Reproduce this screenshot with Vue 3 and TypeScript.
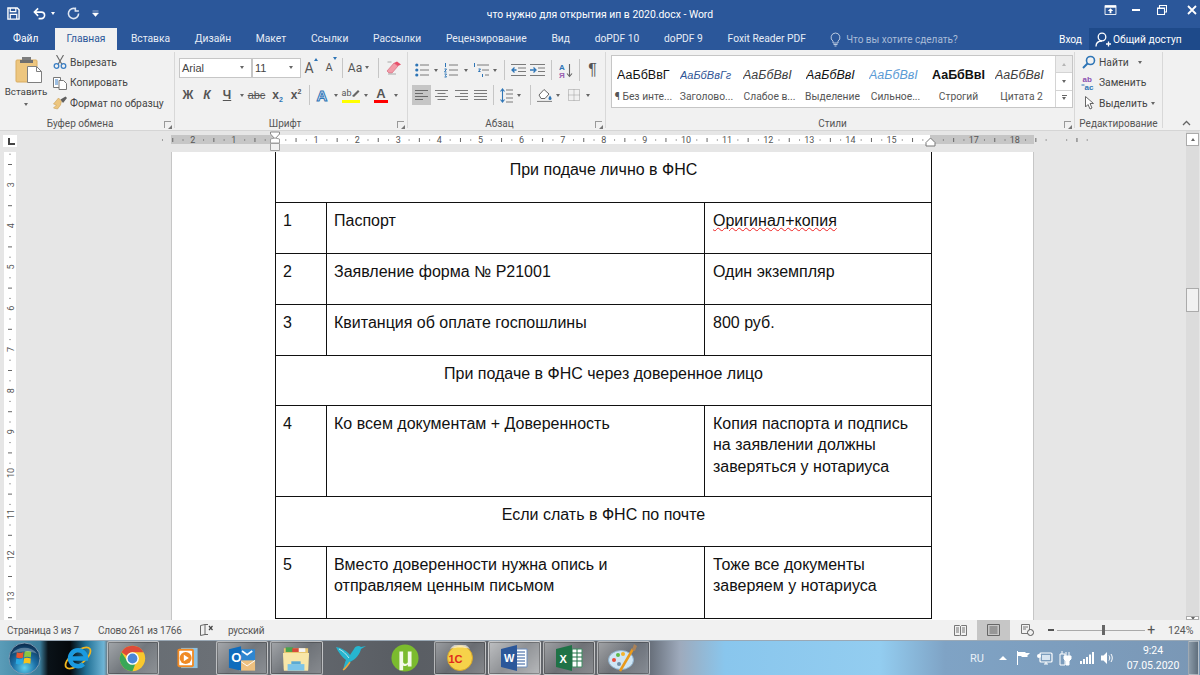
<script setup lang="ts">
const tabs = ['Вставка', 'Дизайн', 'Макет', 'Ссылки', 'Рассылки', 'Рецензирование', 'Вид', 'doPDF 10', 'doPDF 9', 'Foxit Reader PDF']
const styles = [
  { s: 'АаБбВвГ', l: '¶ Без инте...', c: 's-normal' },
  { s: 'АаБбВвГг', l: 'Заголово...', c: 's-head' },
  { s: 'АаБбВвI', l: 'Слабое в...', c: 's-weak' },
  { s: 'АаБбВвI', l: 'Выделение', c: 's-em' },
  { s: 'АаБбВвI', l: 'Сильное...', c: 's-strong' },
  { s: 'АаБбВвI', l: 'Строгий', c: 's-bold' },
  { s: 'АаБбВвI', l: 'Цитата 2', c: 's-quote' },
]
type Row = { kind: 'head' | 'row'; h: string; text?: string; n?: string; a?: string[]; b?: string[]; wavy?: boolean }
const rows: Row[] = [
  { kind: 'head', h: 'h50', text: 'При подаче лично в ФНС' },
  { kind: 'row', h: 'h51', n: '1', a: ['Паспорт'], b: ['Оригинал+копия'], wavy: true },
  { kind: 'row', h: 'h51', n: '2', a: ['Заявление форма № Р21001'], b: ['Один экземпляр'] },
  { kind: 'row', h: 'h51', n: '3', a: ['Квитанция об оплате госпошлины'], b: ['800 руб.'] },
  { kind: 'head', h: 'h50', text: 'При подаче в ФНС через доверенное лицо' },
  { kind: 'row', h: 'h91', n: '4', a: ['Ко всем документам + Доверенность'], b: ['Копия паспорта и подпись', 'на заявлении должны', 'заверяться у нотариуса'] },
  { kind: 'head', h: 'h50', text: 'Если слать в ФНС по почте' },
  { kind: 'row', h: 'h72', n: '5', a: ['Вместо доверенности нужна опись и', 'отправляем ценным письмом'], b: ['Тоже все документы', 'заверяем у нотариуса'] },
]
const X0 = 104
const CM = 41.1
const hNums: { x: number; t: number }[] = []
for (let n = -2; n <= 18; n++) if (n !== 0 && n !== 16) hNums.push({ x: X0 + n * CM, t: Math.abs(n) })
const hTicks: number[] = []
const hDots: number[] = []
for (let n = -3; n <= 19; n++) {
  hTicks.push(X0 + (n + 0.5) * CM)
  hDots.push(X0 + (n + 0.25) * CM, X0 + (n + 0.75) * CM)
}
const vNums: { y: number; t: number }[] = []
const vTicks: number[] = []
const vDots: number[] = []
for (let n = 3; n <= 13; n++) vNums.push({ y: -91 + n * 41.2, t: n })
for (let n = 2; n <= 13; n++) {
  vTicks.push(-91 + (n + 0.5) * 41.2)
  vDots.push(-91 + (n + 0.25) * 41.2, -91 + (n + 0.75) * 41.2)
}
</script>

<template>
  <div class="app">
    <header class="title">
      <div class="qat">
        <svg width="13" height="13" viewBox="0 0 14 14"><path d="M1 1h10l2 2v10H1z" fill="none" stroke="#fff" stroke-width="1.500"/><path d="M3.500 1v4h6V1M3.500 13V8h7v5" fill="none" stroke="#fff" stroke-width="1.300"/></svg>
        <svg class="q-undo" width="13" height="13" viewBox="0 0 14 14"><path d="M2 5.500h7a3.500 3.500 0 0 1 0 7H6M5.500 1.500 1.500 5.500l4 4" fill="none" stroke="#fff" stroke-width="1.700"/></svg>
        <i class="caret white q-c1"></i>
        <svg class="q-redo" width="13" height="13" viewBox="0 0 14 14"><path d="M9.600 2.200A5.500 5.500 0 1 0 12.500 7M9 .5v3.800h3.800" fill="none" stroke="#dfe7f3" stroke-width="1.700"/></svg>
        <svg class="q-more" width="7" height="7" viewBox="0 0 7 7"><path d="M.5 1h6M.5 3h6L3.500 6.500z" fill="#fff" stroke="#fff" stroke-width=".5"/></svg>
      </div>
      <div class="doc-name">что нужно для открытия ип в 2020.docx - Word</div>
      <div class="win">
        <svg width="13" height="10" viewBox="0 0 13 11"><path d="M.5.500h12v10H.5z" fill="none" stroke="#fff"/><path d="M.5 2h12" stroke="#fff" stroke-width="2"/><path d="M6.500 3.500l3 3H7.500v2.500h-2V6.500h-2z" fill="#fff"/></svg>
        <svg class="w-min" width="8" height="2" viewBox="0 0 8 2"><path d="M0 1h8" stroke="#fff" stroke-width="2"/></svg>
        <svg class="w-max" width="10" height="10" viewBox="0 0 10 10"><path d="M.5 3h7v6.500h-7zM.5 3.500h7M2.500 2.500V.5h7v6.500h-2" fill="none" stroke="#fff" stroke-width="1.100"/></svg>
        <svg class="w-x" width="10" height="10" viewBox="0 0 10 10"><path d="M1 1l8 8M9 1l-8 8" stroke="#fff" stroke-width="1.800"/></svg>
      </div>
    </header>

    <nav class="tabs">
      <span class="tab file">Файл</span>
      <span class="tab active">Главная</span>
      <span v-for="t in tabs" :key="t" class="tab">{{ t }}</span>
      <span class="tell">
        <svg width="11" height="15" viewBox="0 0 11 15"><path d="M5.500 1a4.500 4.500 0 0 1 2.500 8.200V11H3V9.200A4.500 4.500 0 0 1 5.500 1zM3.500 12.500h4M4.500 14h2" fill="none" stroke="#b9c9e0"/></svg>
        Что вы хотите сделать?
      </span>
      <span class="login">Вход</span>
      <span class="share">
        <svg width="16" height="15" viewBox="0 0 16 15"><circle cx="7" cy="5" r="3.800" fill="none" stroke="#fff" stroke-width="1.300"/><path d="M1 14.500c0-3.500 2.500-5.500 6-5.500M11 12h5M13.500 9.500v5" fill="none" stroke="#fff" stroke-width="1.300"/></svg>
        Общий доступ
      </span>
    </nav>

    <section class="ribbon">
      <div class="group g-clip">
        <div class="g-body clip-body">
          <div class="paste">
            <svg width="28" height="26" viewBox="0 0 28 26"><rect x="1" y="3" width="21" height="22" rx="1" fill="#edc67f" stroke="#d9ad62"/><rect x="7" y="0" width="9" height="6" fill="#7d7d7d"/><rect x="5" y="3" width="13" height="3" fill="#6f6f6f"/><path d="M12.500 9.500h9l5 5v11h-14z" fill="#fff" stroke="#7f7f7f"/><path d="M21.500 9.500v5h5" fill="none" stroke="#7f7f7f"/></svg>
            <span class="paste-t">Вставить</span>
            <i class="caret"></i>
          </div>
          <div class="clip-cmds">
            <div class="cmd">
              <svg class="ci" width="14" height="14" viewBox="0 0 14 14"><path d="M3.500 0l5.500 9.500M10.500 0 5 9.500" stroke="#666" stroke-width="1.100" fill="none"/><circle cx="3.500" cy="11" r="2.300" fill="none" stroke="#3b7fc4" stroke-width="1.300"/><circle cx="10.500" cy="11" r="2.300" fill="none" stroke="#3b7fc4" stroke-width="1.300"/></svg>
              Вырезать
            </div>
            <div class="cmd">
              <svg class="ci" width="14" height="14" viewBox="0 0 14 14"><path d="M.5 1.500h7v10h-7z" fill="#fff" stroke="#777"/><path d="M6 4.500h4.500l3 3v6H6z" fill="#fff" stroke="#777"/><path d="M2 4h3M2 6h3M2 8h3" stroke="#3b7fc4"/></svg>
              Копировать
            </div>
            <div class="cmd">
              <svg class="ci" width="15" height="14" viewBox="0 0 15 14"><path d="M9 5 6 2 1 8l3 1-3 3 4 1 3-4z" fill="#edc67f" stroke="#c99f58" stroke-width=".6"/><path d="M8 3.500l5-3 1.500 1.500-4 5z" fill="#5f5f5f"/></svg>
              Формат по образцу
            </div>
          </div>
        </div>
        <div class="g-label pr-clip">Буфер обмена<i class="launch"></i></div>
      </div>

      <div class="group g-font">
        <div class="g-body col">
          <div class="cells font-r1">
            <span class="combo"><b>Arial</b><i class="caret"></i></span>
            <span class="combo"><b>11</b><i class="caret"></i></span>
            <span class="ic big-a">A<sup class="up"></sup></span>
            <span class="ic small-a">A<sup class="down"></sup></span>
            <i class="sep"></i>
            <span class="ic aa">Aa<i class="caret"></i></span>
            <i class="sep"></i>
            <svg width="16" height="14" viewBox="0 0 16 14"><path d="M1 10 8 2l4 3-6 7H3z" fill="#f29ca8" stroke="#d76c7e" stroke-width=".7"/><path d="M8 2l3-1.500 4 3L12 5z" fill="#e84f6a"/><path d="M1.500 1h4M2 13h8" stroke="#a9a9a9"/></svg>
          </div>
          <div class="cells font-r2">
            <span class="fmt b">Ж</span>
            <span class="fmt it">К</span>
            <span class="fmt und">Ч</span>
            <i class="caret"></i>
            <span class="fmt abc">abc</span>
            <span class="fmt">x<sub>2</sub></span>
            <span class="fmt">x<sup class="blue">2</sup></span>
            <i class="sep"></i>
            <span class="texteff">A</span>
            <i class="caret"></i>
            <span class="hl">ab<svg width="9" height="9" viewBox="0 0 9 9"><path d="M1 7 7 1l1.500 1.500L3 8z" fill="#666"/></svg></span>
            <i class="caret"></i>
            <span class="fc">A</span>
            <i class="caret"></i>
          </div>
        </div>
        <div class="g-label pr-font">Шрифт<i class="launch"></i></div>
      </div>

      <div class="group g-para">
        <div class="g-body col">
          <div class="cells para-r1">
            <svg width="14" height="14" viewBox="0 0 14 14"><circle cx="1.800" cy="2" r="1.600" fill="#2e75b6"/><circle cx="1.800" cy="7" r="1.600" fill="#2e75b6"/><circle cx="1.800" cy="12" r="1.600" fill="#2e75b6"/><path d="M5 2h9M5 7h9M5 12h9" stroke="#7a7a7a"/></svg>
            <i class="caret"></i>
            <svg width="14" height="15" viewBox="0 0 14 15"><path d="M1.500 0v4M.5 6h2l-2 3h2M.5 11h2l-1 1.500 1 1.500h-2" fill="none" stroke="#2e75b6"/><path d="M5 2h9M5 7h9M5 12h9" stroke="#7a7a7a"/></svg>
            <i class="caret"></i>
            <svg width="16" height="15" viewBox="0 0 16 15"><path d="M1.500 0v4M5.500 6h2l-2 2.500h2M9.500 11v3" fill="none" stroke="#2e75b6"/><path d="M4 2h12M9 7h7M12 12h4" stroke="#7a7a7a"/></svg>
            <i class="caret"></i>
            <i class="sep"></i>
            <svg width="15" height="12" viewBox="0 0 15 12"><path d="M0 .5h15M7 4h8M7 7.500h8M0 11.500h15" stroke="#7a7a7a"/><path d="M5.500 6H1.500M3.500 3.500 1 6l2.500 2.500" fill="none" stroke="#2e75b6" stroke-width="1.300"/></svg>
            <svg width="15" height="12" viewBox="0 0 15 12"><path d="M0 .5h15M8 4h7M8 7.500h7M0 11.500h15" stroke="#7a7a7a"/><path d="M0 6h5M3.500 3.500 6 6 3.500 8.500" fill="none" stroke="#2e75b6" stroke-width="1.300"/></svg>
            <i class="sep"></i>
            <svg width="14" height="15" viewBox="0 0 14 15"><text x="0" y="6.500" class="sort-a">А</text><text x="0" y="14.500" class="sort-b">Я</text><path d="M10.500 1v12M8 10.500l2.500 3 2.500-3" fill="none" stroke="#666" stroke-width="1.100"/></svg>
            <i class="sep tall"></i>
            <span class="pil">¶</span>
          </div>
          <div class="cells para-r2">
            <span class="al active-al"><svg width="13" height="11" viewBox="0 0 13 11"><path d="M0 .5h13M0 3.500h8M0 6.500h13M0 9.500h8" stroke="#6a6a6a"/></svg></span>
            <span class="al"><svg width="13" height="11" viewBox="0 0 13 11"><path d="M0 .5h13M2.500 3.500h8M0 6.500h13M2.500 9.500h8" stroke="#7a7a7a"/></svg></span>
            <span class="al"><svg width="13" height="11" viewBox="0 0 13 11"><path d="M0 .5h13M5 3.500h8M0 6.500h13M5 9.500h8" stroke="#7a7a7a"/></svg></span>
            <span class="al"><svg width="13" height="11" viewBox="0 0 13 11"><path d="M0 .5h13M0 3.500h13M0 6.500h13M0 9.500h13" stroke="#7a7a7a"/></svg></span>
            <i class="sep"></i>
            <svg width="13" height="15" viewBox="0 0 13 15"><path d="M6 2h7M6 6h7M6 10h7M6 14h7" stroke="#7a7a7a"/><path d="M2.500 1v13M.5 3.500l2-2.500 2 2.500M.5 11.500l2 2.500 2-2.500" fill="none" stroke="#2e75b6" stroke-width="1.100"/></svg>
            <i class="caret"></i>
            <i class="sep"></i>
            <svg width="16" height="14" viewBox="0 0 16 14"><path d="M2 7 7 1.500l5 4.500-4 4.500H4z" fill="#fff" stroke="#666"/><path d="M13 7.500c1 1.500 1.500 2.300 1.500 3a1.500 1.500 0 0 1-3 0c0-.7.500-1.500 1.500-3z" fill="#2e75b6"/><path d="M0 13.500h15" stroke="#8a8a8a" stroke-width="1.200"/></svg>
            <i class="caret"></i>
            <svg width="12" height="12" viewBox="0 0 12 12"><path d="M.5.500h11v11H.5zM6 .5v11M.5 6h11" fill="none" stroke="#9a9a9a" stroke-dasharray="1 1"/></svg>
            <i class="caret"></i>
          </div>
        </div>
        <div class="g-label pr-para">Абзац<i class="launch"></i></div>
      </div>

      <div class="group g-styles">
        <div class="g-body">
          <div class="gallery">
            <div v-for="st in styles" :key="st.l" class="style">
              <span class="preview" :class="st.c">{{ st.s }}</span>
              <span class="s-label">{{ st.l }}</span>
            </div>
            <div class="g-scroll">
              <span class="disabled"><i class="caret up-c"></i></span>
              <span><i class="caret"></i></span>
              <span class="last"><i class="caret bar"></i></span>
            </div>
          </div>
        </div>
        <div class="g-label pr-styles">Стили<i class="launch"></i></div>
      </div>

      <div class="group g-edit">
        <div class="g-body edit-body">
          <div class="cmd">
            <svg class="ei" width="14" height="14" viewBox="0 0 14 14"><circle cx="8.500" cy="5.500" r="4" fill="none" stroke="#2e75b6" stroke-width="1.600"/><path d="M5.500 8.500 1 13" stroke="#2e75b6" stroke-width="2"/></svg>
            Найти<i class="caret after-f"></i>
          </div>
          <div class="cmd">
            <svg class="ei" width="15" height="15" viewBox="0 0 15 15"><text x="1" y="7" class="rep-a">ab</text><text x="3" y="14.500" class="rep-b">ac</text><path d="M0 10h3" stroke="#2e75b6"/></svg>
            Заменить
          </div>
          <div class="cmd">
            <svg class="ei" width="14" height="15" viewBox="0 0 14 15"><path d="M3.500.5v10.500l2.500-2.500 2 4.500 2-1-2-4.500h3.500z" fill="#fff" stroke="#666"/></svg>
            Выделить<i class="caret after-s"></i>
          </div>
        </div>
        <div class="g-label">Редактирование</div>
      </div>

      <div class="collapse">
        <svg width="9" height="6" viewBox="0 0 9 6"><path d="M1 5l3.500-3.500L8 5" fill="none" stroke="#666" stroke-width="1.300"/></svg>
      </div>
    </section>

    <main class="work">
      <div class="corner"><span class="tabstop"></span></div>
      <div class="hruler-cell">
        <svg class="hruler" width="863" height="9" viewBox="0 0 863 9">
          <rect x="0" y="0" width="863" height="9" fill="#c6c6c6"/>
          <rect x="104" y="0" width="655" height="9" fill="#fff"/>
          <rect v-for="x in hTicks" :key="'t' + x" :x="x" y="3" width="1" height="4" fill="#666"/>
          <rect v-for="x in hDots" :key="'d' + x" :x="x" y="4.500" width="1" height="1" fill="#555"/>
          <text v-for="n in hNums" :key="'n' + n.x" :x="n.x" y="8" class="rnum" text-anchor="middle">{{ n.t }}</text>
          <path d="M99.500-3h9v2l-4.500 5-4.500-5z" fill="#fff" stroke="#8a8a8a"/>
          <path d="M99.500 4l4.500-1 4.500 1v4h-9z" fill="#fff" stroke="#a0a0a0"/>
          <path d="M99.500 8.500h9v7h-9z" fill="#f2f2f2" stroke="#a0a0a0"/>
          <path d="M755 7.500l4.500-4.500 4.500 4.500v3.500h-9z" fill="#fff" stroke="#777"/>
        </svg>
      </div>
      <div class="blank"></div>
      <aside class="scroll">
        <span class="sb top"><i class="caret up-c"></i></span>
        <span class="thumb"></span>
        <span class="sb bottom"><i class="caret"></i></span>
      </aside>
      <div class="vzone">
        <svg class="vruler" width="12" height="468" viewBox="0 0 12 468">
          <rect width="12" height="468" fill="#fff"/>
          <rect v-for="y in vTicks" :key="'vt' + y" x="4" :y="y" width="4" height="1" fill="#666"/>
          <rect v-for="y in vDots" :key="'vd' + y" x="5.500" :y="y" width="1" height="1" fill="#555"/>
          <text v-for="n in vNums" :key="'vn' + n.y" class="rnum" text-anchor="middle" :transform="`translate(9.500 ${n.y}) rotate(-90)`">{{ n.t }}</text>
        </svg>
      </div>
      <div class="page">
        <table class="doc">
          <colgroup><col class="c1"><col class="c2"><col class="c3"></colgroup>
          <tbody>
            <tr v-for="(r, i) in rows" :key="i" :class="r.h">
              <td v-if="r.kind === 'head'" colspan="3" class="hd" :class="{ first: i === 0 }">{{ r.text }}</td>
              <template v-else>
                <td>{{ r.n }}</td>
                <td><div v-for="l in r.a" :key="l">{{ l }}</div></td>
                <td class="last-c"><div v-for="l in r.b" :key="l" :class="{ wavy: r.wavy }">{{ l }}</div></td>
              </template>
            </tr>
          </tbody>
        </table>
      </div>
      <div class="blank lower"></div>
    </main>

    <footer class="status">
      <span class="st1">Страница 3 из 7</span>
      <span class="st2">Слово 261 из 1766</span>
      <svg class="st-book" width="13" height="12" viewBox="0 0 13 12"><path d="M.5 1.500 5 .5v10l-4.500 1zM5 .5h3M5 10.500h3" fill="none" stroke="#666"/><path d="M9 2l3.500 4M12.500 2 9 6" stroke="#444" stroke-width="1.200"/></svg>
      <span class="st3">русский</span>
      <span class="spacer"></span>
      <svg class="v-read" width="13" height="11" viewBox="0 0 13 11"><path d="M.5.500h5l1 1 1-1h5v10h-5l-1-.5-1 .5h-5zM6.500 1.500v9M2 3h3M2 5h3M2 7h3M8 3h3M8 5h3M8 7h3" fill="none" stroke="#777"/></svg>
      <span class="v-print"><svg width="13" height="12" viewBox="0 0 13 12"><path d="M.5.500h12v11H.5zM2.500 3h8M2.500 5h8M2.500 7h8M2.500 9h8" fill="#c6c6c6" stroke="#666"/></svg></span>
      <svg class="v-web" width="13" height="12" viewBox="0 0 13 12"><path d="M.5.500h8v9h-8zM2 3h5M2 5h3" fill="none" stroke="#777"/><circle cx="9.500" cy="8.500" r="3" fill="#f1f1f1" stroke="#555"/></svg>
      <span class="z-minus"></span>
      <span class="z-track"><span class="z-thumb"></span></span>
      <span class="z-plus">+</span>
      <span class="z-val">124%</span>
    </footer>

    <div class="taskbar">
      <div class="orb">
        <svg width="33" height="33" viewBox="0 0 34 34">
          <defs>
            <radialGradient id="orbg" cx=".5" cy=".8" r=".75"><stop offset="0" stop-color="#5ed0ee"/><stop offset=".5" stop-color="#1b6ea5"/><stop offset="1" stop-color="#0c2f52"/></radialGradient>
          </defs>
          <circle cx="17" cy="17" r="16" fill="url(#orbg)" stroke="#7f9bb3"/>
          <path d="M9 10.500c3 1 5 1 7-.5L15.500 16c-2 1-4 1-7 0z" fill="#e8562e"/>
          <path d="M17 10c2-1 4-1 7 0L23.500 16c-3-1-5-1-7 0z" fill="#8cc63f"/>
          <path d="M8.500 17c3 1 5 1 7-.5L15 22.500c-2 1-4 1-7 0z" fill="#2aa7e0"/>
          <path d="M16.500 17c2-1 4-1 7 0L23 22.500c-3-1-5-1-7 0z" fill="#f7c21b"/>
          <path d="M4 12c6-8 20-8 26 0-7-3-19-3-26 0z" fill="#fff" opacity=".3"/>
        </svg>
      </div>
      <div class="task">
        <svg width="30" height="30" viewBox="0 0 30 30"><ellipse cx="15" cy="15" rx="15" ry="6.500" transform="rotate(-38 15 15)" fill="none" stroke="#f2b71e" stroke-width="1.800"/><path d="M7.500 15.500h15.500A8 8 0 1 0 20.500 21" fill="none" stroke="#1a9be0" stroke-width="4.500"/></svg>
      </div>
      <div class="task on">
        <svg width="27" height="27" viewBox="0 0 32 32"><circle cx="16" cy="16" r="15" fill="#f9c82d"/><path d="M16 31A15 15 0 0 1 3 8.500L10 19.500A7 7 0 0 0 19.500 22L16 31z" fill="#3aa757"/><path d="M3 8.500A15 15 0 0 1 29 8.500H16a7 7 0 0 0-6.500 4.500z" fill="#dd4b39"/><circle cx="16" cy="16" r="7.500" fill="#fff"/><circle cx="16" cy="16" r="5.800" fill="#4a86d8"/></svg>
      </div>
      <div class="task">
        <svg width="23" height="22" viewBox="0 0 24 24"><rect x="5" y="1" width="18" height="22" fill="#8fc2e2"/><rect x="1" y="2" width="18" height="20" rx="2" fill="#f08a24"/><rect x="3" y="4" width="14" height="16" rx="1" fill="#fff"/><circle cx="10" cy="12" r="6.500" fill="#f08a24"/><path d="M8 8.500l5.500 3.500L8 15.500z" fill="#fff"/></svg>
      </div>
      <div class="task on">
        <svg width="28" height="27" viewBox="0 0 30 28"><rect x="12" y="4" width="17" height="13" fill="#2f86d0"/><path d="M15 6l5.500 4L26 6" fill="none" stroke="#fff" stroke-width="1.800"/><path d="M12 16h17v11H12z" fill="#edc07f"/><path d="M12 16l8.500 6 8.500-6" fill="none" stroke="#fff"/><path d="M1 4l13-3v26L1 24z" fill="#0f6cbd"/><text x="3.500" y="18" class="t-o">O</text></svg>
      </div>
      <div class="task on">
        <svg width="28" height="27" viewBox="0 0 30 28"><path d="M2 3h26v22H2z" fill="#e8c66f"/><path d="M4 2h8v5H4z" fill="#4aa34c"/><path d="M11 3h7v4h-7z" fill="#d64a3a"/><path d="M18 3h7v4h-7z" fill="#f3f3f3"/><path d="M1 8h28l-1 19H2z" fill="#f8e6a8"/><path d="M6 20h18v7H6z" fill="#7cc4e8"/><path d="M10 17h10v3H10z" fill="#5baad4"/></svg>
      </div>
      <div class="task">
        <svg width="30" height="28" viewBox="0 0 30 28"><path d="M18 5C19 2 23 1 25 3L30 2 25 5C24 10 20 15 14 18 12 21 10 24 7 26 8 22 9 18 10 16 6 13 2 8 0 3 6 4 11 7 14 11z" fill="#27b5cf"/><path d="M14 18C12 21 10 24 7 26" fill="none" stroke="#eaa63f" stroke-width="1.500"/><path d="M3 5c4 2 7 5 10 9" fill="none" stroke="#bfeaf3"/></svg>
      </div>
      <div class="task">
        <svg width="28" height="28" viewBox="0 0 30 30"><circle cx="15" cy="15" r="14.500" fill="#7bbb2e"/><path d="M9 8h4v11c0 3 5 3 5 0V8h4v16h-4v-2c-2 2-4 2-5 1v5H9z" fill="#f4f9ea"/></svg>
      </div>
      <div class="task on">
        <svg width="26" height="26" viewBox="0 0 26 26"><circle cx="13" cy="13" r="12.500" fill="#f6d24a" stroke="#d8a72a"/><path d="M3 4a12 12 0 0 1 20 0c-5-2-15-2-20 0z" fill="#fff" opacity=".6"/><text x="1.500" y="18" class="t-1c">1С</text></svg>
      </div>
      <div class="task on cur">
        <svg width="28" height="26" viewBox="0 0 28 26"><path d="M14 4h13v18H14z" fill="#fff" stroke="#6c8ebf"/><path d="M15 7h10M15 10h10M15 13h10M15 16h10M15 19h10" stroke="#2b579a"/><path d="M1 4 17 0v26L1 22z" fill="#2b579a"/><text x="4" y="17" class="t-w">W</text></svg>
      </div>
      <div class="task on">
        <svg width="28" height="26" viewBox="0 0 28 26"><path d="M14 4h13v18H14z" fill="#fff" stroke="#3f8f63"/><path d="M17 4v18M22 4v18M14 8h13M14 12h13M14 16h13" stroke="#217346"/><path d="M1 4 17 0v26L1 22z" fill="#1f7246"/><text x="4.500" y="17.500" class="t-w">X</text></svg>
      </div>
      <div class="task on">
        <svg width="30" height="30" viewBox="0 0 30 30"><ellipse cx="13" cy="17" rx="12.500" ry="9.500" fill="#cfe6f5" stroke="#8fb3cf"/><circle cx="6" cy="17" r="2" fill="#e6503c"/><circle cx="10" cy="12" r="2" fill="#5dba47"/><circle cx="15" cy="11" r="2" fill="#f4b32c"/><circle cx="11" cy="21" r="2" fill="#6f8ea6"/><path d="M12 28 25 6" stroke="#e99a1c" stroke-width="2.500"/><path d="M24 7l2-6 3 2-2 5z" fill="#a9825a"/></svg>
      </div>
      <span class="spacer"></span>
      <div class="tray">
        <span class="lang">RU</span>
        <i class="tri"></i>
        <svg width="14" height="16" viewBox="0 0 14 16"><path d="M1.500 1v14" stroke="#fff"/><path d="M2 2h7l1 1h4l-3 3 1 1H6L5 6H2z" fill="#fff"/></svg>
        <svg width="16" height="15" viewBox="0 0 16 15"><rect x="3" y="2" width="12" height="9" rx="1" fill="none" stroke="#fff" stroke-width="1.200"/><rect x="5" y="4" width="8" height="5" fill="#d7e4f0"/><path d="M7 13h4M9 11v2" stroke="#fff" stroke-width="1.200"/><circle cx="2" cy="5" r="2" fill="#fff"/></svg>
        <svg width="13" height="16" viewBox="0 0 13 16"><path d="M1 4h5v11H1zM3 1v3" fill="none" stroke="#fff"/><path d="M5 6h7v3l-2 2v4H7v-4L5 9zM7 2v4M10 2v4" fill="#fff" stroke="#fff"/></svg>
        <svg width="15" height="12" viewBox="0 0 15 12"><path d="M1 9h2v3H1zM4 7h2v5H4zM7 5h2v7H7zM10 2.500h2V12h-2zM13 0h2v12h-2z" fill="#fff"/></svg>
        <svg width="14" height="14" viewBox="0 0 14 14"><path d="M1 4.500h2.500L7 1v12L3.500 9.500H1z" fill="#fff"/><path d="M9 4.500c1 1.500 1 3.500 0 5M11 3c1.700 2.500 1.700 5.500 0 8" fill="none" stroke="#fff"/></svg>
      </div>
      <div class="clock"><span>9:24</span><span>07.05.2020</span></div>
      <div class="show-desktop"></div>
    </div>
  </div>
</template>

<style>
html, body { margin: 0; padding: 0; background: #e6e6e6; }
</style>

<style scoped>
.app { width: 1200px; height: 675px; overflow: hidden; display: flex; flex-direction: column; font: 10.300px Roboto, "Noto Sans", sans-serif; color: #444; }
.app * { box-sizing: border-box; }

.title { height: 28px; background: #2b579a; color: #fff; display: grid; grid-template-columns: 1fr auto 1fr; align-items: center; flex: none; }
.qat { display: flex; align-items: center; padding: 0 0 2px 7px; }
.q-undo { margin-left: 13px; }
.q-c1 { margin-left: 5px; }
.q-redo { margin-left: 12px; }
.q-more { margin-left: 12px; }
.doc-name { font-size: 10.400px; white-space: nowrap; }
.win { justify-self: end; display: flex; align-items: center; padding-right: 3px; margin-top: -8px; }
.w-min { margin-left: 15px; }
.w-max { margin-left: 17px; }
.w-x { margin-left: 20px; }

.tabs { height: 22px; background: #2b579a; color: #e7edf6; display: flex; align-items: center; flex: none; font-size: 10.250px; }
.tab { padding: 0 12.400px; height: 22px; line-height: 22px; white-space: nowrap; }
.tab.file { width: 55px; color: #fff; padding: 0 13px; }
.tab.active { background: #f1f1f1; color: #2b579a; width: 62px; text-align: center; padding: 0; margin-right: 1.500px; }
.tell { margin-left: 12px; display: flex; align-items: center; gap: 5px; color: #a9bcd8; font-size: 10px; }
.login { margin-left: auto; color: #fff; width: 30px; }
.share { width: 111px; height: 22px; background: #1e4a8a; color: #fff; display: flex; align-items: center; gap: 2px; padding-left: 6px; font-size: 10.250px; }

.ribbon { height: 81px; flex: none; background: #f1f1f1; display: flex; padding-top: 2px; border-bottom: 1px solid #d5d5d5; }
.group { display: flex; flex-direction: column; height: 76px; border-right: 1px solid #d8d8d8; flex: none; }
.g-body { height: 63px; flex: none; }
.g-label { height: 13px; position: relative; text-align: center; line-height: 18px; color: #555; font-size: 10px; white-space: nowrap; }
.pr-clip { padding-right: 14px; }
.pr-font { padding-right: 12px; }
.pr-para { padding-right: 14px; }
.pr-styles { padding-right: 15px; }
.launch { position: absolute; right: 3px; top: 6px; width: 7px; height: 7px; border: 1px solid #999; border-width: 1px 0 0 1px; }
.launch::after { content: ""; position: absolute; right: -1px; bottom: -1px; border: 2px solid; border-color: transparent #777 #777 transparent; }
.caret { display: inline-block; width: 0; height: 0; border: 2.500px solid transparent; border-top: 3px solid #666; border-bottom: 0; }
.caret.white { border-top-color: #fff; }
.caret.up-c { border-top: 0; border-bottom: 3px solid #666; }
.caret.bar { position: relative; }
.caret.bar::before { content: ""; position: absolute; left: -2.500px; top: -5px; width: 5px; height: 1px; background: #666; }
.sep { width: 1px; height: 20px; background: #c6c6c6; display: block; }
.sep.tall { height: 22px; }

.g-clip { width: 175px; }
.clip-body { display: flex; }
.paste { width: 52px; display: flex; flex-direction: column; align-items: center; padding-top: 5px; }
.paste svg { margin-left: 5px; }
.paste-t { margin-top: 3px; font-size: 9.800px; }
.paste .caret { margin-top: 6px; }
.cmd { display: flex; align-items: center; height: 20.500px; white-space: nowrap; position: relative; }
.ci { width: 16px; margin-right: 2px; flex: none; }

.g-font { width: 233px; }
.col { display: flex; flex-direction: column; }
.cells { display: grid; align-items: center; justify-items: center; }
.font-r1 { margin-top: 5px; height: 21px; margin-left: 4px; grid-template-columns: 73px 49px 20px 20px 2px 31px 8px 24px; }
.font-r2 { margin-top: 7px; height: 20px; margin-left: 3px; grid-template-columns: 20px 18px 22px 7px 23px 19px 18px 8px 18px 9px 22px 8px 22px 7px; }
.combo { width: 100%; height: 20px; background: #fff; border: 1px solid #c6c6c6; display: flex; align-items: center; justify-content: space-between; padding: 0 7px 0 2px; font-size: 11px; }
.combo b { font-weight: 400; font-family: "Liberation Sans", sans-serif; }
.ic { position: relative; color: #555; }
.big-a { font-size: 14px; }
.small-a { font-size: 11px; }
.up, .down { display: inline-block; border: 2px solid transparent; position: relative; top: -6px; }
.up { border-bottom: 3px solid #2e75b6; border-top: 0; }
.down { border-top: 3px solid #2e75b6; border-bottom: 0; }
.aa { font-size: 12px; display: flex; align-items: center; gap: 3px; }
.fmt { color: #555; font-size: 12px; font-weight: 700; font-family: "Liberation Sans", sans-serif; white-space: nowrap; line-height: 16px; }
.fmt sub, .fmt sup { font-size: 7px; line-height: 0; }
.fmt sub { color: #2e75b6; }
.it { font-style: italic; }
.und { text-decoration: underline; }
.abc { text-decoration: line-through; font-weight: 400; font-size: 11px; }
.texteff { font: 700 15px "Liberation Sans", sans-serif; color: #dfeaf6; -webkit-text-stroke: 1px #2e75b6; }
.hl { font-size: 9px; color: #555; border-bottom: 3px solid #ffff00; display: flex; align-items: center; line-height: 11px; height: 15px; }
.fc { font-size: 13px; font-weight: 700; font-family: "Liberation Sans", sans-serif; border-bottom: 3px solid #ff0000; line-height: 12px; width: 14px; text-align: center; color: #555; }

.g-para { width: 198px; }
.para-r1 { margin-top: 7px; height: 20px; margin-left: 4px; grid-template-columns: 19px 10px 20px 10px 20px 7px 12px 17px 20px 8px 22px 4px 23px; }
.para-r2 { margin-top: 6px; height: 20px; margin-left: 4px; grid-template-columns: 19px 21px 19px 18px 9px 16px 10px 12px 17px 10px 21px 8px; }
.al { width: 100%; height: 20px; display: flex; align-items: center; justify-content: center; }
.active-al { background: #c6c6c6; }
.pil { font: 400 16px "Liberation Sans", sans-serif; color: #555; }
.sort-a { font: 700 8px "Liberation Sans", sans-serif; fill: #2e75b6; }
.sort-b { font: 700 8px "Liberation Sans", sans-serif; fill: #9a5fb0; }

.g-styles { width: 469px; }
.gallery { margin: 3px 0 0 5px; width: 462px; height: 53px; background: #fff; border: 1px solid #c6c6c6; display: flex; }
.style { width: 63px; display: flex; flex-direction: column; align-items: center; flex: none; overflow: hidden; }
.preview { height: 34px; font: 12.500px/38px "Liberation Sans", sans-serif; white-space: nowrap; color: #111; width: 53px; overflow: hidden; }
.s-label { font-size: 10.300px; color: #555; white-space: nowrap; }
.s-head { font-style: italic; font-size: 11px; color: #2f5496; }
.s-weak { font-style: italic; color: #404040; }
.s-em { font-style: italic; }
.s-strong { font-style: italic; color: #5b9bd5; }
.s-bold { font-weight: 700; }
.s-quote { font-style: italic; color: #404040; }
.g-scroll { margin-left: auto; width: 17px; border-left: 1px solid #d4d4d4; display: flex; flex-direction: column; }
.g-scroll span { flex: 1; display: flex; align-items: center; justify-content: center; border-bottom: 1px solid #d4d4d4; }
.g-scroll .last { border-bottom: 0; }
.g-scroll .disabled { background: #ececec; }
.disabled .caret { border-bottom-color: #b5b5b5; }

.g-edit { width: 88px; }
.edit-body { padding: 0 0 0 6px; }
.ei { width: 16px; margin-right: 2px; flex: none; }
.after-f { margin-left: 9px; }
.after-s { margin-left: 3px; }
.rep-a { font: 700 8px "Liberation Sans", sans-serif; fill: #8a4fb0; }
.rep-b { font: 700 8px "Liberation Sans", sans-serif; fill: #2e75b6; }
.collapse { flex: 1; display: flex; align-items: flex-end; justify-content: flex-end; padding: 0 9px 2px 0; height: 76px; }

.work { height: 489px; flex: none; background: #e6e6e6; display: grid; grid-template-columns: 171px 863px 152px 14px; grid-template-rows: 21px 468px; }
.corner { padding: 4px 0 0 3px; }
.tabstop { display: block; width: 14px; height: 12px; background: #fff; position: relative; }
.tabstop::after { content: ""; position: absolute; left: 5px; top: 3px; width: 5px; height: 5px; border: solid #444; border-width: 0 0 2px 2px; }
.hruler-cell { padding-top: 4px; }
.hruler { display: block; overflow: visible; }
.rnum { font: 9px Roboto, sans-serif; fill: #555; }
.scroll { grid-column: 4; grid-row: 1 / 3; background: #dcdcdc; display: flex; flex-direction: column; padding-top: 2px; position: relative; width: 13px; }
.sb { display: flex; align-items: center; justify-content: center; height: 13px; background: #fff; border: 1px solid #ababab; flex: none; }
.thumb { margin-top: 142px; height: 24px; background: #f1f1f1; border: 1px solid #ababab; flex: none; }
.bottom { margin-top: auto; height: 4px; overflow: hidden; }
.vzone { grid-column: 1; grid-row: 2; padding-left: 4px; }
.vruler { display: block; }
.page { grid-column: 2; grid-row: 2; background: #fff; border: solid #c6c6c6; border-width: 0 1px; padding-left: 103px; overflow: hidden; }
.doc { table-layout: fixed; border-collapse: collapse; width: 656px; font: 16px/21.500px "Liberation Sans", sans-serif; color: #111; }
.c1 { width: 51px; } .c2 { width: 378px; } .c3 { width: 227px; }
.doc td { border: 1.500px solid #111; padding: 7px 7px 0; vertical-align: top; white-space: nowrap; }
.doc td.last-c { padding-left: 8px; }
.doc td.hd { text-align: center; }
.doc td.first { border-top: 0; padding-top: 7px; }
.h50 { height: 50px; } .h51 { height: 51px; } .h91 { height: 91px; } .h72 { height: 72px; }
.wavy { text-decoration: underline wavy #e22; text-decoration-thickness: 1px; text-underline-offset: 1px; display: inline-block; }

.status { height: 20px; flex: none; background: #f1f1f1; display: flex; align-items: center; color: #555; font-size: 10px; letter-spacing: -.2px; }
.st1 { margin-left: 7px; width: 73px; white-space: nowrap; }
.st2 { margin-left: 18px; width: 83px; white-space: nowrap; }
.st-book { margin-left: 19px; }
.st3 { margin-left: 15px; }
.spacer { flex: 1; }
.v-print { width: 33px; height: 20px; background: #c6c6c6; margin-left: 10px; display: flex; align-items: center; justify-content: center; }
.v-web { margin-left: 11px; }
.z-minus { width: 6px; height: 2px; background: #555; margin-left: 14px; }
.z-track { width: 88px; height: 1px; background: #aaa; margin-left: 3px; position: relative; }
.z-thumb { position: absolute; left: 45px; top: -5px; width: 3px; height: 10px; background: #666; }
.z-plus { margin-left: 1px; font-size: 14px; width: 10px; text-align: center; }
.z-val { margin: 0 8px 0 12px; width: 24px; font-size: 10.500px; white-space: nowrap; letter-spacing: 0; }

.taskbar { height: 35px; flex: none; display: flex; align-items: center; border-top: 1px solid #9aa8b5; background: linear-gradient(90deg, #5a9cb8 0, #3a7c9a 40px, #0a1218 48px, #05080c 70px, #1f6f94 86px, #6fb5d6 104px, #666c72 108px, #6b7076 215px, #595d63 400px, #64676c 600px, #5f6670 645px, #9eaabc 680px, #89c6ed 725px, #93cdf0 880px, #7fa3c5 945px, #7a97b5 1200px); color: #fff; }
.orb { width: 51px; flex: none; padding-left: 8px; display: flex; }
.task { width: 54.500px; height: 34px; flex: none; display: flex; align-items: center; justify-content: center; border: 1px solid transparent; border-radius: 2px; }
.task.on { border-color: rgba(255,255,255,.45); background: linear-gradient(135deg, rgba(255,255,255,.4), rgba(255,255,255,.08) 50%, rgba(255,255,255,.25)); box-shadow: inset 0 0 0 1px rgba(0,0,0,.25); width: 52.500px; margin: 0 1px; }
.task.cur { background: linear-gradient(135deg, rgba(255,255,255,.6), rgba(255,255,255,.3) 50%, rgba(255,255,255,.55)); }
.t-o { font: 700 14px "Liberation Sans", sans-serif; fill: #fff; }
.t-1c { font: 700 11px "Liberation Sans", sans-serif; fill: #e02a1c; }
.t-w { font: 700 11px "Liberation Sans", sans-serif; fill: #fff; }
.tray { display: flex; align-items: center; gap: 6.500px; margin-right: 14px; }
.lang { font: 11px Roboto, sans-serif; color: #e8f0f7; width: 14px; margin-right: 8px; }
.tri { width: 0; height: 0; border: 4px solid transparent; border-bottom: 4px solid #fff; border-top: 0; margin-right: 3px; }
.clock { display: flex; flex-direction: column; align-items: center; width: 50px; font-size: 10.500px; line-height: 15px; color: #fff; }
.show-desktop { width: 11px; height: 34px; margin: 0 1px 0 10px; background: linear-gradient(90deg, #8a9aa8, #5f6e7c); border: 1px solid rgba(255,255,255,.4); }
</style>
